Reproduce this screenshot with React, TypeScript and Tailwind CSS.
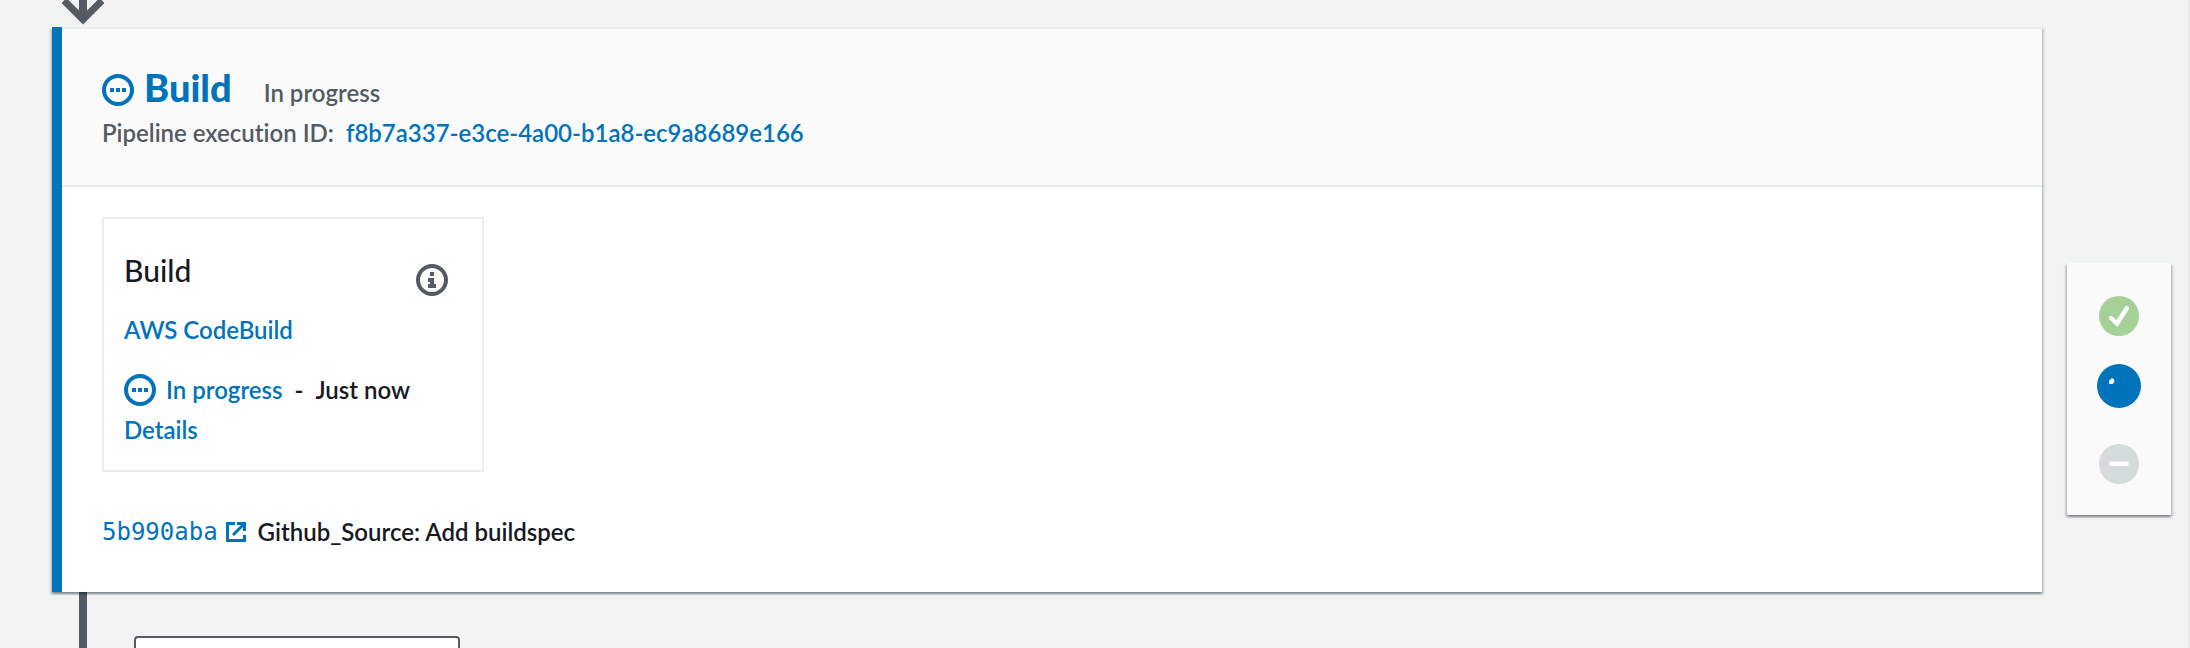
import type { ReactNode } from "react";

const SHADOW =
  "shadow-[0_2px_2px_rgba(0,28,36,0.3),2px_2px_2px_rgba(0,28,36,0.15),-2px_2px_2px_rgba(0,28,36,0.15)]";

function ProgressIcon() {
  return (
    <svg className="size-8 shrink-0 self-center" viewBox="0 0 32 32" fill="none" aria-hidden="true">
      <circle cx="16" cy="16" r="14" stroke="#0073bb" strokeWidth="4" />
      <path d="M8 14h4v4H8zM14 14h4v4h-4zM20 14h4v4h-4z" fill="#0073bb" />
    </svg>
  );
}

function InfoIcon() {
  return (
    <svg className="size-8" viewBox="0 0 32 32" fill="none" aria-hidden="true">
      <circle cx="16" cy="16" r="14" stroke="#545b64" strokeWidth="4" />
      <path d="M14 8h4v4h-4zM12 14h6v6h2v4h-8v-4h2v-2h-2z" fill="#545b64" />
    </svg>
  );
}

function ExternalIcon() {
  return (
    <svg className="size-5" viewBox="0 0 20 20" fill="none" stroke="#0073bb" strokeWidth="3" aria-hidden="true">
      <path d="M9 1.5H1.5v17h17V13" />
      <path d="M11 1.5h7.5V9M18 2L7 13" />
    </svg>
  );
}

function TextLink({ children, className = "" }: { children: ReactNode; className?: string }) {
  return (
    <a href="#" className={`text-[#0073bb] hover:underline ${className}`}>
      {children}
    </a>
  );
}

function ActionCard() {
  return (
    <article className="w-[382px] border-2 border-[#eaeded] px-5 pt-[31px] pb-5">
      <div className="flex h-10 items-start justify-between">
        <h3 className="text-[30px] leading-10 font-medium">Build</h3>
        <button type="button" aria-label="Action information" className="mt-3.5 mr-3.5">
          <InfoIcon />
        </button>
      </div>
      <p className="mt-5">
        <TextLink>AWS CodeBuild</TextLink>
      </p>
      <p className="mt-5 flex items-center">
        <ProgressIcon />
        <span className="ml-2.5 text-[#0073bb]">In progress</span>
        <span className="mx-3">-</span>
        <span>Just now</span>
      </p>
      <p>
        <TextLink>Details</TextLink>
      </p>
    </article>
  );
}

function StageNav() {
  return (
    <nav aria-label="Stages" className={`flex w-[104px] flex-col items-center bg-[#fafafa] pt-[33px] pb-[31px] ${SHADOW}`}>
      <button type="button" aria-label="Succeeded">
        <svg className="size-10" viewBox="0 0 40 40" fill="none">
          <circle cx="20" cy="20" r="20" fill="#a5d199" />
          <path d="M12 22l6 5.5L28 12" stroke="#fff" strokeWidth="4.4" strokeLinecap="round" />
        </svg>
      </button>
      <button type="button" aria-label="In progress" className="mt-7">
        <svg className="size-11" viewBox="0 0 44 44">
          <circle cx="22" cy="22" r="22" fill="#0073bb" />
          <path d="M15 14l2.2 1.6v3l-2 1.6-3.4-.8.6-3z" fill="#fff" />
        </svg>
      </button>
      <button type="button" aria-label="Not started" className="mt-9">
        <svg className="size-10" viewBox="0 0 40 40">
          <circle cx="20" cy="20" r="20" fill="#d5dbdb" />
          <rect x="10.5" y="17.5" width="19" height="4.5" rx="1" fill="#fff" />
        </svg>
      </button>
    </nav>
  );
}

export default function App() {
  return (
    <div className="flex h-screen items-start overflow-hidden border-r-2 border-[#e9ebeb] bg-[#f2f3f3] pr-[17px] font-['Lato','Open_Sans',sans-serif] text-2xl leading-10 font-semibold text-[#16191f] [font-variant-ligatures:none]">
      <main className="ml-[52px] flex-1">
        <svg className="ml-[10px] h-[27px] w-[42px]" viewBox="0 0 42 27" fill="none" stroke="#545b64" aria-hidden="true">
          <path d="M21 0v19" strokeWidth="8" />
          <path d="M2 .5l19 19 19-19" strokeWidth="7" />
        </svg>
        <section className={`relative flex bg-white ${SHADOW}`}>
          <div className="w-2.5 bg-[#0073bb]" />
          <div className="flex-1 border-t-2 border-[#eaeded]">
            <header className="border-b-2 border-[#eaeded] bg-[#fafafa] px-10 pt-[38px] pb-8 text-[#545b64]">
              <div className="flex items-baseline">
                <ProgressIcon />
                <h2 className="ml-2.5 text-[38px] leading-10 font-black text-[#0073bb]">Build</h2>
                <span className="ml-8">In progress</span>
              </div>
              <p>
                Pipeline execution ID: <TextLink className="ml-1.5">f8b7a337-e3ce-4a00-b1a8-ec9a8689e166</TextLink>
              </p>
            </header>
            <div className="px-10 pt-[30px] pb-10">
              <ActionCard />
              <p className="mt-10 flex items-center">
                <TextLink className="flex items-center gap-2 font-['DejaVu_Sans_Mono',monospace] font-normal">
                  5b990aba
                  <ExternalIcon />
                </TextLink>
                <span className="ml-3">Github_Source: Add buildspec</span>
              </p>
            </div>
          </div>
        </section>
        <div className="flex items-start">
          <div className="ml-[27px] h-14 w-2 bg-[#545b64]" />
          <button
            type="button"
            aria-label="Disable transition"
            className="mt-11 ml-[47px] h-11 w-[326px] rounded border-2 border-[#545b64] bg-white"
          />
        </div>
      </main>
      <aside className="ml-[25px] pt-[263px]">
        <StageNav />
      </aside>
    </div>
  );
}
